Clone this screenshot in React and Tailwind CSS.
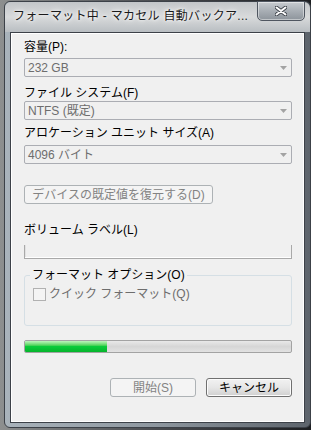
import React from "react";

const font = { fontFamily: '"Liberation Sans", "Noto Sans CJK JP", sans-serif' };

// 無効化されたコンボボックス
const Combo = ({ value }) => (
  <div className="flex h-[19px] items-center justify-between rounded-[2px] border border-[#abadb3] bg-[#f0f0f0] pl-[3px] pr-[4px] text-[12px] leading-none text-[#6d6d6d]">
    <span>{value}</span>
    <svg width="7" height="4" viewBox="0 0 7 4">
      <path d="M0 0h7L3.5 4z" fill="#a3a3a3" />
    </svg>
  </div>
);

const Label = ({ children, className = "" }) => (
  <div className={`h-[16px] text-[12px] leading-[16px] text-black ${className}`}>{children}</div>
);

const App = () => {
  return (
    <div
      className="flex h-[430px] w-[311px] bg-gradient-to-r from-[#8d8f8f] via-[#4a4c50] to-[#1d1f22] pb-[2px] pl-[4px] pr-0 pt-[1px]"
      style={font}
    >
      <div className="flex flex-1 flex-col rounded-b-[6px] rounded-t-[6px] border border-[#3c4148] bg-gradient-to-r from-[#a9b3bb] via-[#8e979f] to-[#5d646c] pb-[4px] pl-[5px] pr-[5px]">
        {/* Title bar */}
        <div className="-ml-[5px] -mr-[5px] flex h-[30px] items-start justify-between rounded-t-[6px] bg-gradient-to-b from-[#c3c6c9] via-[#d8dadb] to-[#b9bec2] pl-[8px] pr-[5px]">
          <div className="pt-[6px] text-[12px] leading-[16px] tracking-[0.3px] text-[#1a1a1a] [text-shadow:0_0_6px_#ffffff,0_0_3px_#ffffff]">
            フォーマット中 - マカセル 自動バックア...
          </div>
          <div className="-mt-[1px] flex h-[20px] w-[48px] items-center justify-center rounded-b-[5px] border border-[#4f5660] bg-gradient-to-b from-[#c8ccd0] via-[#a8aeb4] to-[#8d949b] shadow-[inset_0_0_0_1px_rgba(255,255,255,0.45)]">
            <svg width="12" height="10" viewBox="0 0 12 10">
              <path d="M1.5 1.5L10.5 8.5M10.5 1.5L1.5 8.5" stroke="#3a3f46" strokeWidth="3.6" strokeLinecap="round" />
              <path d="M1.5 1.5L10.5 8.5M10.5 1.5L1.5 8.5" stroke="#ffffff" strokeWidth="2" strokeLinecap="round" />
            </svg>
          </div>
        </div>

        {/* Client area */}
        <div className="flex flex-1 flex-col border border-[#3c4148] bg-[#f0f0f0] pl-[13px] pr-[12px] pt-[6px] shadow-[inset_0_0_0_1px_#ffffff]">
          <Label>容量(P):</Label>
          <div className="mt-[3px]">
            <Combo value="232 GB" />
          </div>

          <Label className="mt-[8px]">ファイル システム(F)</Label>
          <Combo value="NTFS (既定)" />

          <Label className="mt-[5px]">アロケーション ユニット サイズ(A)</Label>
          <div className="mt-[4px]">
            <Combo value="4096 バイト" />
          </div>

          <div className="mt-[21px] flex h-[19px] w-[189px] items-center justify-center rounded-[3px] border border-[#adb2b5] bg-[#f4f4f4] text-[12px] leading-none text-[#838383]">
            デバイスの既定値を復元する(D)
          </div>

          <Label className="mt-[18px]">ボリューム ラベル(L)</Label>
          <div className="mt-[7px] h-[14px] border-x border-b border-[#a9a9a9] bg-[#f0f0f0] shadow-[inset_0_-1px_0_#ffffff,inset_1px_0_0_#e2e2e2]" />

          <fieldset className="mt-[8px] rounded-[3px] border border-[#d5dfe5] pb-[23px]">
            <legend className="ml-[5px] px-[2px] text-[12px] leading-[16px] text-black">
              フォーマット オプション(O)
            </legend>
            <div className="ml-[8px] mt-[3px] flex h-[16px] items-center gap-[3px] text-[12px] leading-[16px] text-[#6d6d6d]">
              <div className="h-[13px] w-[13px] border border-[#b1b1b1] bg-[#f4f4f4]" />
              <span>クイック フォーマット(Q)</span>
            </div>
          </fieldset>

          <div className="mt-[14px] flex h-[13px] overflow-hidden rounded-[2px] border border-[#a3a3a3] bg-gradient-to-b from-[#e9e9e9] via-[#d6d6d6] to-[#e2e2e2]">
            <div className="w-[31%] bg-gradient-to-b from-[#bdf5bd] via-[#0acb3a] to-[#06b42c]" />
          </div>

          <div className="mt-[25px] flex justify-end gap-[10px]">
            <div className="flex h-[19px] w-[86px] items-center justify-center rounded-[3px] border border-[#adb2b5] bg-[#f4f4f4] text-[12px] leading-none text-[#838383]">
              開始(S)
            </div>
            <div className="flex h-[19px] w-[86px] items-center justify-center rounded-[3px] border border-[#707070] bg-gradient-to-b from-[#f2f2f2] via-[#e6e6e6] to-[#d0d0d0] text-[12px] leading-none text-black shadow-[inset_0_0_0_1px_#fcfcfc]">
              キャンセル
            </div>
          </div>
        </div>
      </div>
    </div>
  );
};

export default App;
